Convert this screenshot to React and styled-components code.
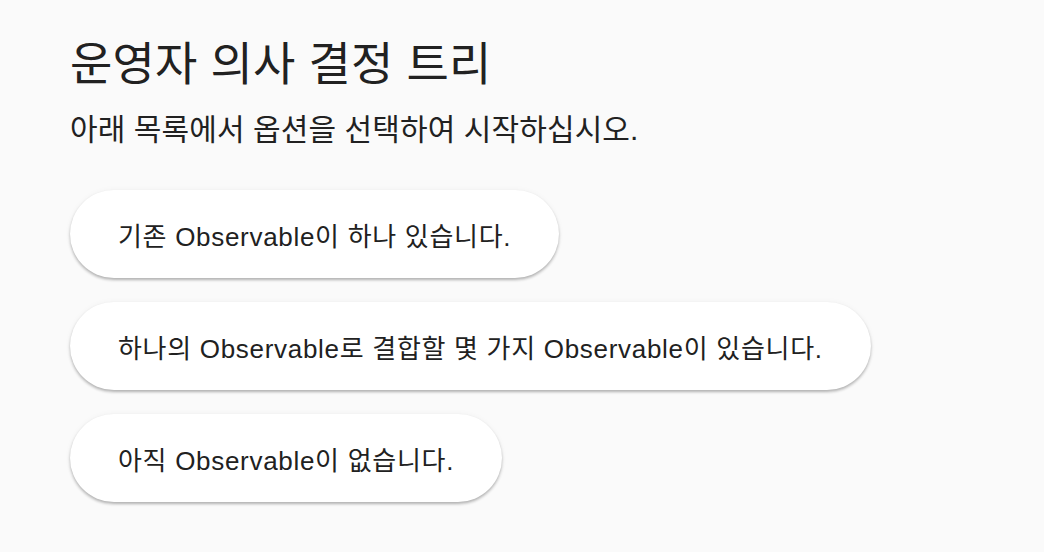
import React from 'react';
import styled, { createGlobalStyle } from 'styled-components';

const GlobalStyle = createGlobalStyle`
    html, body {
        margin: 0;
        padding: 0;
        background: #fafafa;
    }
    body {
        font-family: "Liberation Sans", "Noto Sans CJK KR", sans-serif;
        color: #212121;
    }
`;

const Page = styled.div`
    display: flex;
    flex-direction: column;
    align-items: flex-start;
    padding: 37px 70px;
`;

const Title = styled.h1`
    font-size: 46px;
    font-weight: 400;
    letter-spacing: 0.2px;
    line-height: 55px;
    margin: 0;
`;

const Subtitle = styled.p`
    font-size: 30px;
    letter-spacing: 0.1px;
    line-height: 39px;
    margin: 18px 0 41px;
`;

const Options = styled.div`
    display: flex;
    flex-direction: column;
    align-items: flex-start;
    gap: 24px;
`;

const OptionButton = styled.button`
    font-family: inherit;
    font-size: 26px;
    letter-spacing: 0.7px;
    color: #212121;
    background: #fff;
    border: none;
    border-radius: 44px;
    height: 88px;
    padding: 0 48px;
    box-shadow: 0 2px 3px rgba(0, 0, 0, 0.28), 0 0 6px rgba(0, 0, 0, 0.04);
    cursor: pointer;
`;

const options = [
    '기존 Observable이 하나 있습니다.',
    '하나의 Observable로 결합할 몇 가지 Observable이 있습니다.',
    '아직 Observable이 없습니다.',
];

export default function App() {
    return (
        <>
            <GlobalStyle />
            <Page>
                <Title>운영자 의사 결정 트리</Title>
                <Subtitle>아래 목록에서 옵션을 선택하여 시작하십시오.</Subtitle>
                <Options>
                    {options.map((text) => (
                        <OptionButton key={text}>{text}</OptionButton>
                    ))}
                </Options>
            </Page>
        </>
    );
}
